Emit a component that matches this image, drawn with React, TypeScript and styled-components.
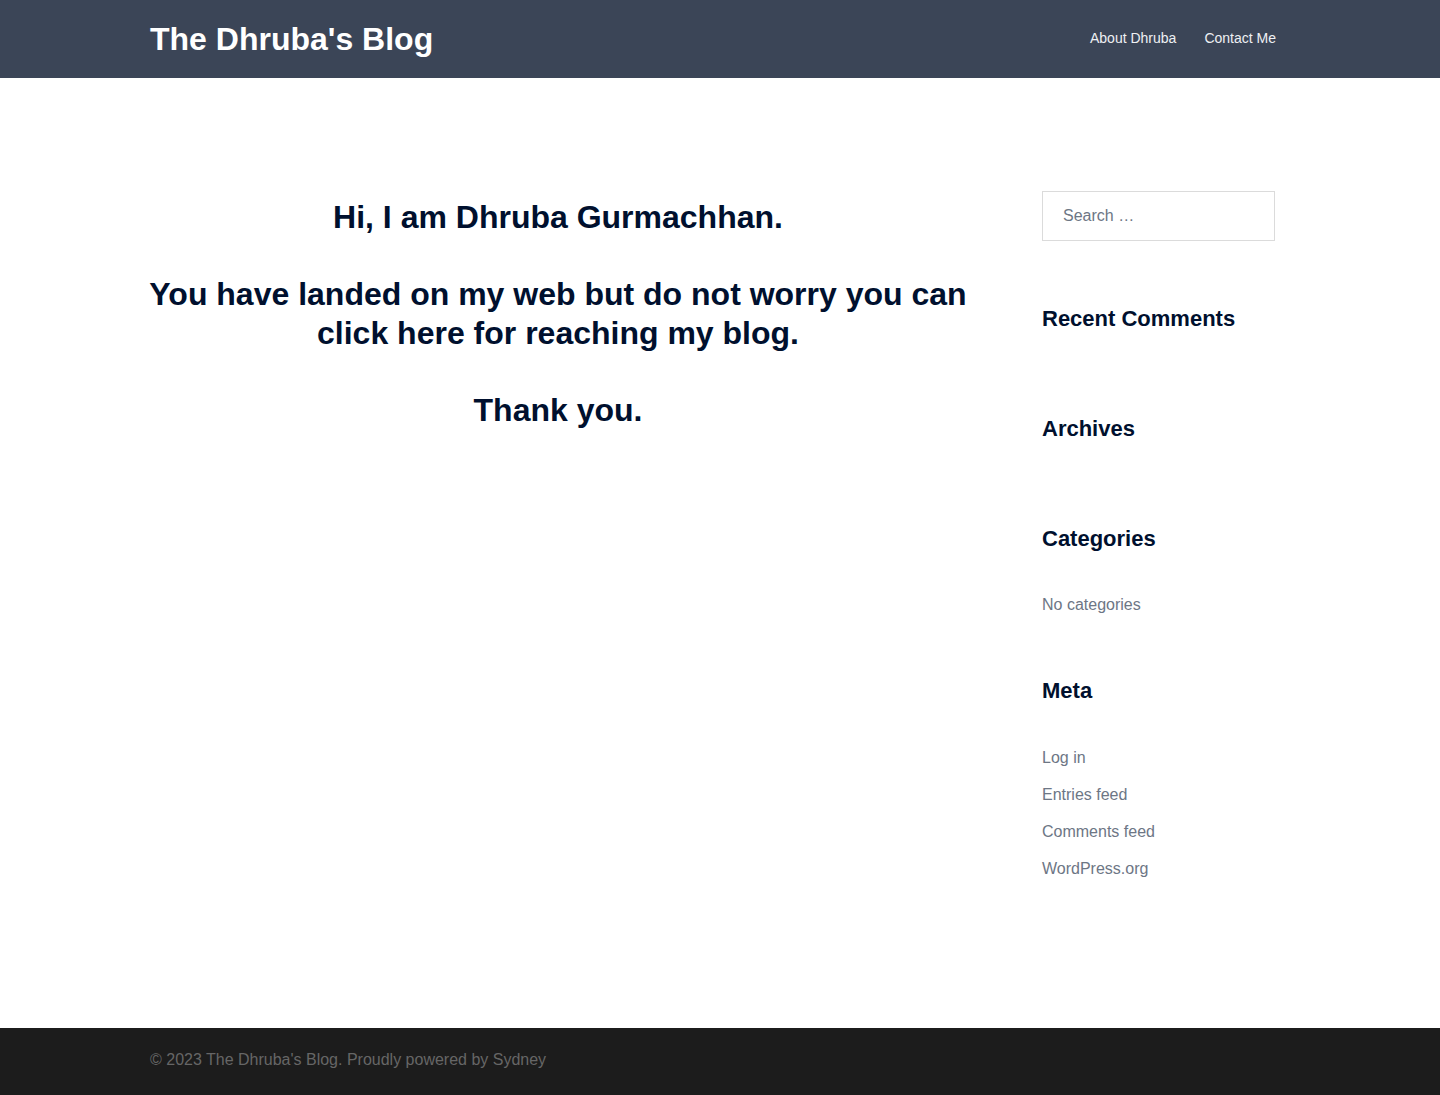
import React from 'react';
import styled, { createGlobalStyle } from 'styled-components';

const GlobalStyle = createGlobalStyle`
  html, body {
    margin: 0;
    padding: 0;
    background: #fff;
    font-family: "Liberation Sans", Arial, sans-serif;
  }
  * { box-sizing: border-box; }
`;

const widgets = [
  { title: 'Recent Comments', items: [] as string[] },
  { title: 'Archives', items: [] as string[] },
  { title: 'Categories', items: ['No categories'], plain: true },
  { title: 'Meta', items: ['Log in', 'Entries feed', 'Comments feed', 'WordPress.org'] },
];

export default function App() {
  return (
    <Page>
      <GlobalStyle />
      <Header>
        <Container>
          <HeaderRow>
            <SiteTitle href="#">The Dhruba's Blog</SiteTitle>
            <Nav>
              <NavLink href="#">About Dhruba</NavLink>
              <NavLink href="#">Contact Me</NavLink>
            </Nav>
          </HeaderRow>
        </Container>
      </Header>

      <Content>
        <Container>
          <Columns>
            <Main>
              <Heading>Hi, I am Dhruba Gurmachhan.</Heading>
              <Heading>
                You have landed on my web but do not worry you can click here for reaching my blog.
              </Heading>
              <Heading>Thank you.</Heading>
            </Main>

            <Sidebar>
              <SearchInput type="search" placeholder="Search …" />
              {widgets.map((w) => (
                <Widget key={w.title}>
                  <WidgetTitle>{w.title}</WidgetTitle>
                  <WidgetList $empty={w.items.length === 0}>
                    {w.items.map((item) => (
                      <WidgetItem key={item}>
                        {w.plain ? item : <WidgetLink href="#">{item}</WidgetLink>}
                      </WidgetItem>
                    ))}
                  </WidgetList>
                </Widget>
              ))}
            </Sidebar>
          </Columns>
        </Container>
      </Content>

      <Footer>
        <Container>
          <FooterText>
            © 2023 The Dhruba's Blog. Proudly powered by <FooterLink href="#">Sydney</FooterLink>
          </FooterText>
        </Container>
      </Footer>
    </Page>
  );
}

const Page = styled.div`
  min-height: 100vh;
  display: flex;
  flex-direction: column;
`;

const Container = styled.div`
  width: 1140px;
  margin: 0 auto;
`;

const Header = styled.header`
  background-color: #3b4557;
  height: 78px;
`;

const HeaderRow = styled.div`
  height: 78px;
  display: flex;
  align-items: center;
  justify-content: space-between;
`;

const SiteTitle = styled.a`
  color: #fff;
  font-size: 32px;
  font-weight: 700;
  line-height: 1.2;
  text-decoration: none;
`;

const Nav = styled.nav`
  display: flex;
  gap: 28px;
  margin: -2px 14px 0 0;
`;

const NavLink = styled.a`
  color: #eef0f3;
  font-size: 14px;
  text-decoration: none;
`;

const Content = styled.main`
  flex: 1;
  padding-top: 113px;
`;

const Columns = styled.div`
  display: grid;
  grid-template-columns: 817px 248px;
  justify-content: space-between;
`;

const Main = styled.div`
  width: 822px;
  margin-left: -3px;
  display: flex;
  flex-direction: column;
  gap: 39px;
  padding-top: 7px;
`;

const Heading = styled.h2`
  margin: 0;
  color: #00102e;
  font-size: 32px;
  font-weight: 700;
  line-height: 1.2;
  text-align: center;
`;

const Sidebar = styled.aside`
  display: flex;
  flex-direction: column;
  padding-right: 15px;
`;

const SearchInput = styled.input`
  width: 233px;
  height: 50px;
  border: 1px solid #dbdbdb;
  padding: 0 20px;
  font-family: "Liberation Sans", Arial, sans-serif;
  font-size: 16px;
  color: #6d7685;
  outline: none;
  margin-bottom: 64px;
  &::placeholder { color: #6d7685; }
`;

const Widget = styled.section`
  margin-bottom: 48px;
`;

const WidgetTitle = styled.h3`
  margin: 0 0 33px;
  color: #00102e;
  font-size: 22px;
  font-weight: 700;
  line-height: 28.8px;
`;

const WidgetList = styled.ul<{ $empty: boolean }>`
  list-style: none;
  margin: 0;
  padding: 0;
  padding-bottom: ${(p) => (p.$empty ? '0' : '6px')};
`;

const WidgetItem = styled.li`
  height: 37px;
  display: flex;
  align-items: center;
  color: #6d7685;
  font-size: 16px;
`;

const WidgetLink = styled.a`
  color: #6d7685;
  text-decoration: none;
`;

const Footer = styled.footer`
  background-color: #1c1c1c;
  padding: 20px 0 23px;
`;

const FooterText = styled.div`
  color: #666;
  font-size: 16px;
  line-height: 24px;
`;

const FooterLink = styled.a`
  color: #666;
  text-decoration: none;
`;
